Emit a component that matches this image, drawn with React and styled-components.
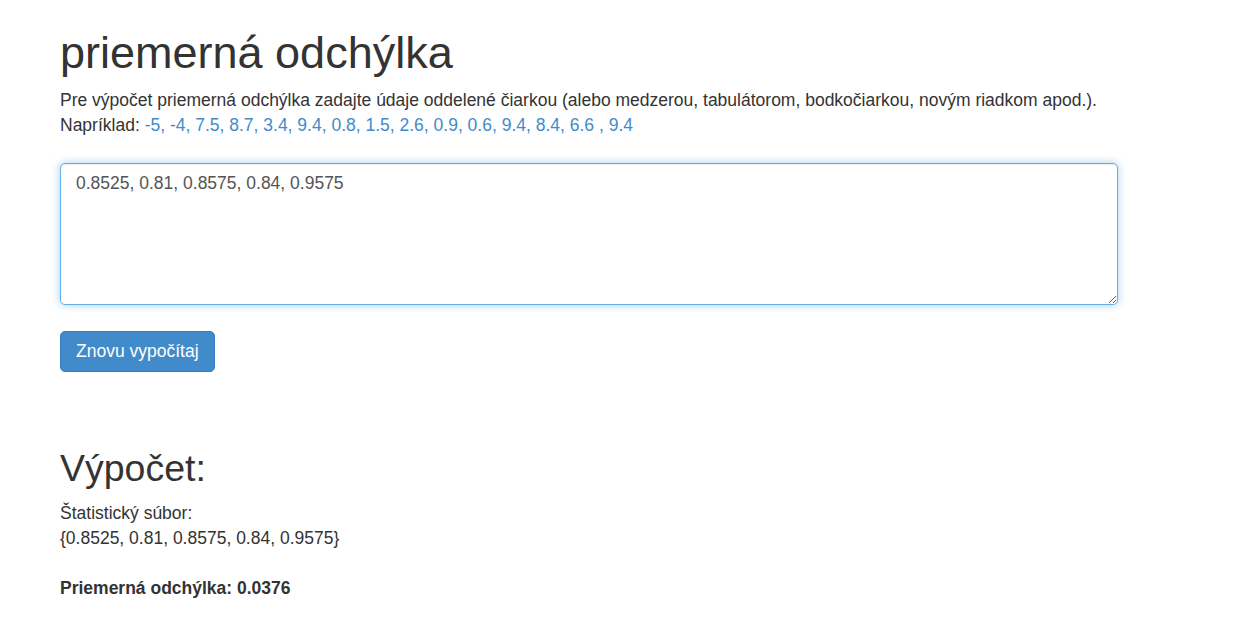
import React from 'react'
import styled, { createGlobalStyle } from 'styled-components'

const GlobalStyle = createGlobalStyle`
    html, body {
        margin: 0;
        padding: 0;
        background: #ffffff;
    }
    body {
        font-family: 'Liberation Sans', Arial, sans-serif;
        font-size: 17.5px;
        line-height: 25px;
        color: #333333;
    }
`

const Container = styled.div`
    padding: 28px 0 0 60px;
    width: 1058px;
`

const Title = styled.h1`
    font-size: 45px;
    font-weight: 400;
    line-height: 1.1;
    margin: 0 0 10px 0;
`

const SubTitle = styled.h2`
    font-size: 37.5px;
    font-weight: 400;
    line-height: 1.1;
    margin: 76px 0 12px 0;
`

const Text = styled.p`
    margin: 0 0 ${props => props.$gap || 0}px 0;
    font-weight: ${props => (props.$bold ? 700 : 400)};
`

const Link = styled.a`
    color: #428bca;
    text-decoration: none;
    &:hover {
        text-decoration: underline;
    }
`

const Input = styled.textarea`
    display: block;
    box-sizing: border-box;
    width: 1058px;
    height: 142px;
    padding: 7.5px 15px;
    margin: 0 0 26px 0;
    font-family: 'Liberation Sans', Arial, sans-serif;
    font-size: 17.5px;
    line-height: 25px;
    color: #555555;
    background: #ffffff;
    border: 1px solid #66afe9;
    border-radius: 5px;
    outline: none;
    box-shadow: inset 0 1px 1px rgba(0, 0, 0, 0.075), 0 0 8px rgba(102, 175, 233, 0.6);
`

const Button = styled.button`
    display: inline-block;
    height: 41px;
    padding: 0 15px;
    font-family: 'Liberation Sans', Arial, sans-serif;
    font-size: 17.5px;
    line-height: 25px;
    color: #ffffff;
    background-color: #428bca;
    border: 1px solid #357ebd;
    border-radius: 5px;
    cursor: pointer;
    &:hover {
        background-color: #3071a9;
    }
`

const App = () => {
    const data = '0.8525, 0.81, 0.8575, 0.84, 0.9575'
    return (
        <>
            <GlobalStyle />
            <Container>
                <Title>priemerná odchýlka</Title>
                <Text $gap={25}>
                    Pre výpočet priemerná odchýlka zadajte údaje oddelené čiarkou (alebo medzerou, tabulátorom, bodkočiarkou, novým riadkom apod.).
                    <br />
                    Napríklad: <Link href="#">-5, -4, 7.5, 8.7, 3.4, 9.4, 0.8, 1.5, 2.6, 0.9, 0.6, 9.4, 8.4, 6.6 , 9.4</Link>
                </Text>
                <Input defaultValue={data} />
                <Button>Znovu vypočítaj</Button>
                <SubTitle>Výpočet:</SubTitle>
                <Text $gap={25}>
                    Štatistický súbor:
                    <br />
                    {'{' + data + '}'}
                </Text>
                <Text $bold>Priemerná odchýlka: 0.0376</Text>
            </Container>
        </>
    )
}

export default App
